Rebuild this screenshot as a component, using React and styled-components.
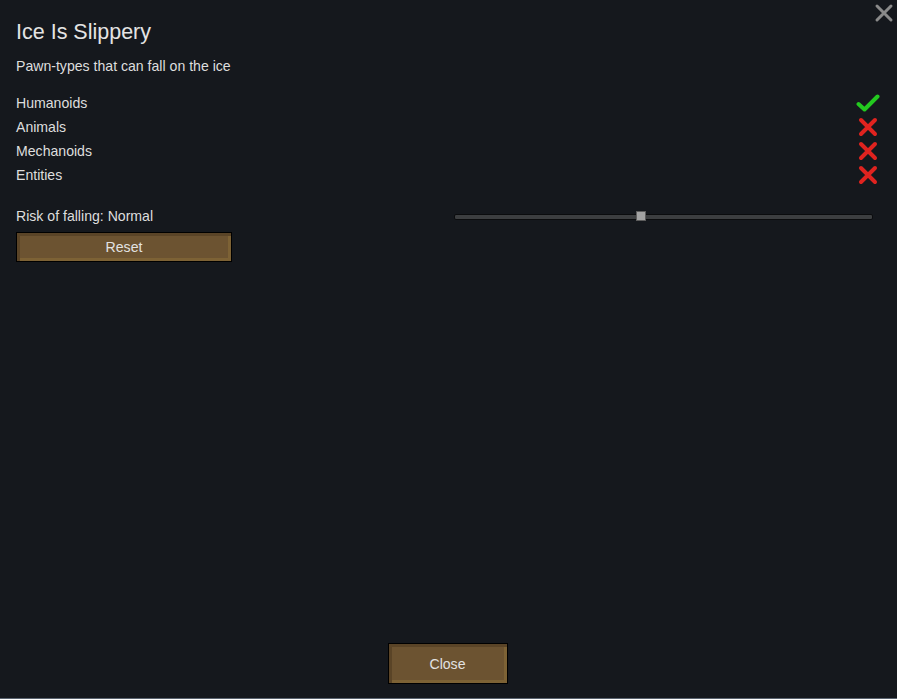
import styled, { createGlobalStyle } from "styled-components";

const GlobalStyle = createGlobalStyle`
  html, body {
    margin: 0;
    padding: 0;
    background: #15181d;
  }
  body {
    font-family: "Liberation Sans", Arial, sans-serif;
    color: #dedede;
  }
`;

const Window = styled.div`
  position: relative;
  width: 897px;
  height: 699px;
  box-sizing: border-box;
  background: #15181d;
  border-bottom: 1px solid #5b6470;
  display: flex;
  flex-direction: column;
  padding: 0 25px 14px 16px;
`;

const CloseCorner = styled.button`
  position: absolute;
  top: 2px;
  right: 2px;
  width: 22px;
  height: 22px;
  padding: 0;
  border: none;
  background: transparent;
  display: flex;
  align-items: center;
  justify-content: center;
`;

const Title = styled.h1`
  margin: 19px 0 0;
  font-size: 21.5px;
  font-weight: normal;
  line-height: 26px;
  color: #e4e4e4;
`;

const Subtitle = styled.div`
  margin-top: 13px;
  font-size: 14.1px;
  line-height: 16px;
`;

const List = styled.div`
  margin-top: 17px;
  display: flex;
  flex-direction: column;
`;

const Row = styled.div`
  display: flex;
  align-items: center;
  justify-content: space-between;
  height: 24px;
  font-size: 14.1px;
`;

const Icon = styled.span`
  width: 24px;
  height: 24px;
  display: flex;
  align-items: center;
  justify-content: center;
  margin-right: -8px;
`;

const SliderRow = styled.div`
  margin-top: 21px;
  display: flex;
  align-items: center;
  justify-content: space-between;
  height: 16px;
  font-size: 14.1px;
`;

const Track = styled.div`
  position: relative;
  width: 417px;
  height: 4px;
  margin-top: 2px;
  margin-right: -1px;
  background: #3c3e40;
  border: 1px solid #0b0c0e;
  border-radius: 2px;
`;

const Thumb = styled.div`
  position: absolute;
  top: -4px;
  width: 10px;
  height: 10px;
  margin-left: -5px;
  background: #a3a3a3;
  border: 1px solid #5c5c5c;
  box-sizing: border-box;
`;

const Button = styled.button`
  box-sizing: border-box;
  width: ${(p) => p.$width}px;
  height: ${(p) => p.$height}px;
  border: 1px solid #000;
  padding: 0;
  background: #6c5331;
  box-shadow: inset 3px 3px 0 #5a4427, inset -3px -3px 0 #7d6235;
  font-family: "Liberation Sans", Arial, sans-serif;
  font-size: 14.1px;
  color: #e2e2e2;
`;

const ResetButton = styled(Button)`
  margin-top: 8px;
`;

const Spacer = styled.div`
  flex: 1;
`;

const Footer = styled.div`
  display: flex;
  justify-content: center;
  padding-left: 7px;
`;

const Check = () => (
  <svg width="24" height="20" viewBox="0 0 24 20">
    <path
      d="M2.5 11 L8.5 16.5 L21.5 3.5"
      fill="none"
      stroke="#23c91f"
      strokeWidth="4"
      strokeLinecap="round"
      strokeLinejoin="round"
    />
  </svg>
);

const Cross = ({ color = "#e0231f", size = 20, width = 4 }) => (
  <svg width={size} height={size} viewBox="0 0 20 20">
    <path
      d="M3 3 L17 17 M17 3 L3 17"
      fill="none"
      stroke={color}
      strokeWidth={width}
      strokeLinecap="round"
    />
  </svg>
);

const pawns = [
  { name: "Humanoids", allowed: true },
  { name: "Animals", allowed: false },
  { name: "Mechanoids", allowed: false },
  { name: "Entities", allowed: false },
];

export default function App() {
  const risk = 0.445;
  return (
    <>
      <GlobalStyle />
      <Window>
        <CloseCorner>
          <Cross color="#8a8a8a" size={20} width={3} />
        </CloseCorner>
        <Title>Ice Is Slippery</Title>
        <Subtitle>Pawn-types that can fall on the ice</Subtitle>
        <List>
          {pawns.map((p) => (
            <Row key={p.name}>
              {p.name}
              <Icon>{p.allowed ? <Check /> : <Cross />}</Icon>
            </Row>
          ))}
        </List>
        <SliderRow>
          Risk of falling: Normal
          <Track>
            <Thumb style={{ left: `${risk * 100}%` }} />
          </Track>
        </SliderRow>
        <ResetButton $width={216} $height={30}>
          Reset
        </ResetButton>
        <Spacer />
        <Footer>
          <Button $width={120} $height={41}>
            Close
          </Button>
        </Footer>
      </Window>
    </>
  );
}
